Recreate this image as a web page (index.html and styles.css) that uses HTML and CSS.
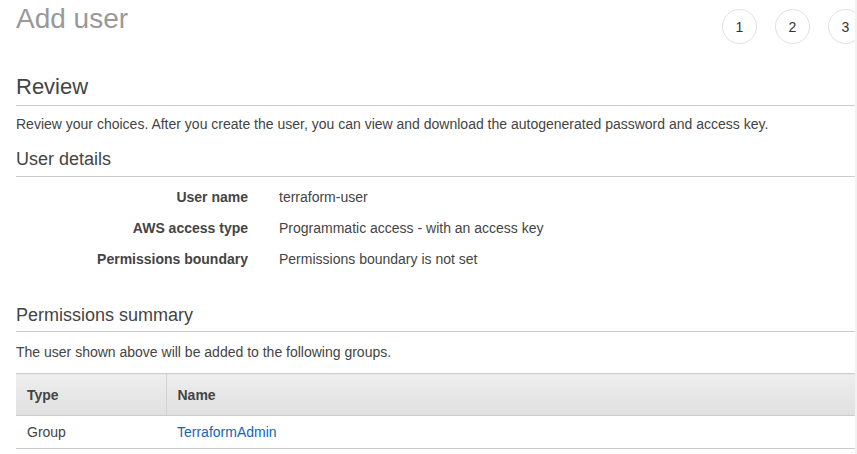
FILE: index.html
```html
<!DOCTYPE html>
<html>
<head>
<meta charset="utf-8">
<link rel="stylesheet" href="styles.css">
</head>
<body>
<div class="frame">
  <main class="page">
    <header class="top">
      <h1 class="title">Add user</h1>
      <ol class="steps">
        <li class="step">1</li>
        <li class="step">2</li>
        <li class="step">3</li>
      </ol>
    </header>

    <h2 class="section-title">Review</h2>
    <p class="intro">Review your choices. After you create the user, you can view and download the autogenerated password and access key.</p>

    <h3 class="sub-title">User details</h3>
    <dl class="details">
      <dt class="label">User name</dt><dd class="value">terraform-user</dd>
      <dt class="label">AWS access type</dt><dd class="value">Programmatic access - with an access key</dd>
      <dt class="label">Permissions boundary</dt><dd class="value">Permissions boundary is not set</dd>
    </dl>

    <h3 class="sub-title perm-title">Permissions summary</h3>
    <p class="note">The user shown above will be added to the following groups.</p>

    <table class="grid">
      <thead>
        <tr><th class="col-type">Type</th><th>Name</th></tr>
      </thead>
      <tbody>
        <tr><td class="col-type">Group</td><td><a class="link" href="#">TerraformAdmin</a></td></tr>
      </tbody>
    </table>
  </main>
  <div class="edge"></div>
</div>
</body>
</html>
```

FILE: styles.css
```css
* { box-sizing: border-box; }
html, body { margin: 0; padding: 0; background: #fff; }
body {
  font-family: "Liberation Sans", Arial, sans-serif;
  color: #444;
  font-size: 14px;
}
.frame {
  display: flex;
  width: 857px;
  height: 454px;
  overflow: hidden;
}
.page {
  width: 855px;
  flex: 0 0 855px;
  padding-left: 16px;
  overflow: hidden;
}
.edge {
  flex: 1;
  background: #f2f2f2;
}
.top {
  display: flex;
  justify-content: space-between;
  align-items: flex-start;
  height: 36px;
}
.title {
  margin: 2px 0 0;
  font-size: 28px;
  line-height: 34px;
  font-weight: normal;
  color: #999;
}
.steps {
  list-style: none;
  margin: 9px -8px 0 0;
  padding: 0;
  display: flex;
  gap: 18px;
  flex-shrink: 0;
}
.step {
  width: 35px;
  height: 35px;
  border: 1px solid #e1e1e1;
  border-radius: 50%;
  display: flex;
  align-items: center;
  justify-content: center;
  font-size: 14px;
  color: #333;
}
.section-title {
  margin: 38px 0 0;
  font-size: 22px;
  line-height: 26px;
  font-weight: normal;
  color: #444;
  padding-bottom: 5px;
  border-bottom: 1px solid #ccc;
}
.intro {
  margin: 8px 0 0;
  line-height: 20px;
}
.sub-title {
  margin: 14px 0 0;
  font-size: 18px;
  line-height: 22px;
  font-weight: normal;
  color: #444;
  padding-bottom: 6px;
  border-bottom: 1px solid #ccc;
}
.perm-title {
  margin-top: 29px;
  padding-bottom: 5px;
}
.details {
  margin: 5px 0 0;
  display: grid;
  grid-template-columns: 232px 1fr;
  column-gap: 31px;
}
.label {
  text-align: right;
  font-weight: bold;
  line-height: 31px;
  color: #444;
}
.value {
  margin: 0;
  line-height: 31px;
}
.note {
  margin: 10px 0 0;
  line-height: 20px;
}
.grid {
  margin-top: 11px;
  width: 845px;
  border-collapse: collapse;
}
.grid th {
  height: 42px;
  text-align: left;
  font-weight: bold;
  padding: 0 11px;
  background: linear-gradient(#eeeeee, #e0e0e0);
  border-top: 1px solid #ccc;
  border-bottom: 1px solid #ccc;
  color: #444;
}
.grid th.col-type { border-right: 1px solid #d2d2d2; }
.grid td {
  height: 33px;
  padding: 0 11px;
  border-bottom: 1px solid #ccc;
}
.col-type { width: 150px; }
.link {
  color: #1166bb;
  text-decoration: none;
}
```
